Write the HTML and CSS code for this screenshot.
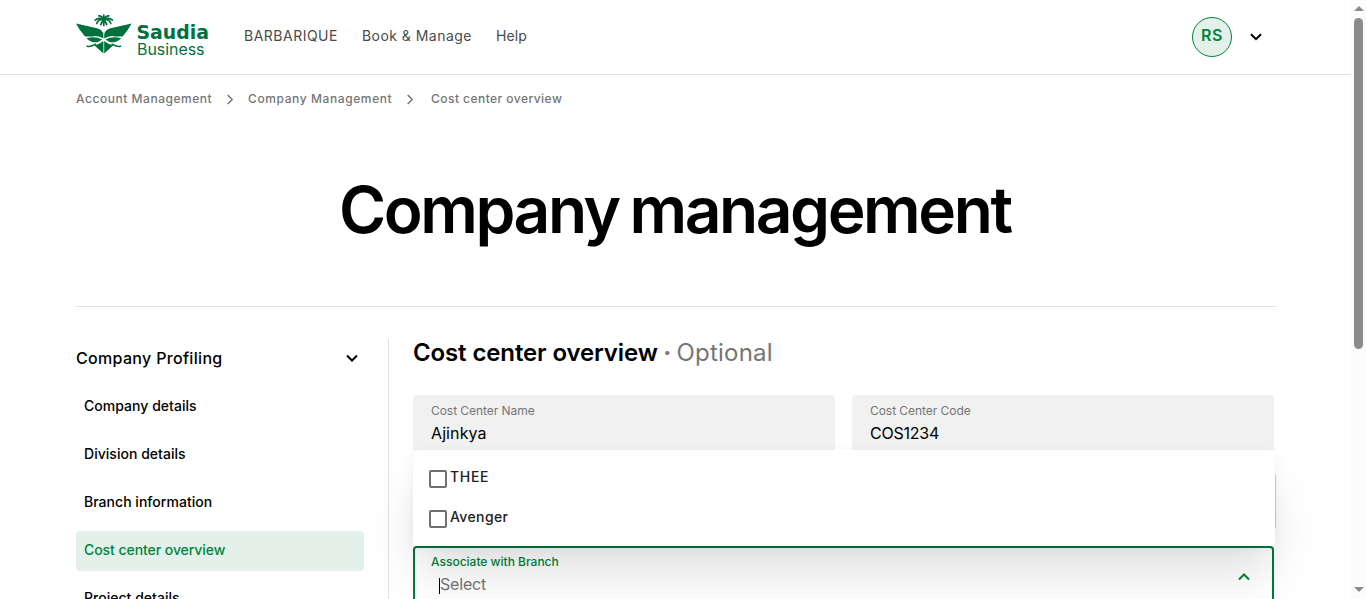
FILE: index.html
```html
<!DOCTYPE html>
<html lang="en">
<head>
<meta charset="utf-8">
<title>Company management</title>
<link rel="stylesheet" href="styles.css">
</head>
<body>
<div class="page">
  <header class="header">
    <svg class="logo" width="134" height="48" viewBox="76 12 134 48" role="img" aria-label="Saudia Business">
      <g fill="#00703c">
        <path d="M76 23.600 L97 28.200 Q102 29.500 103.300 33.500 L103.400 38.600 Q98.500 35.200 92.500 36.400 L85 36.600 Q79.500 30.500 76 23.600Z"/>
        <path d="M131.600 23.600 L110.600 28.200 Q105.600 29.500 104.300 33.500 L104.200 38.600 Q109.100 35.200 115.100 36.400 L122.600 36.600 Q128.100 30.500 131.600 23.600Z"/>
        <path d="M86.400 38.200 Q95 35.600 102.200 39.400 L97.600 42.200 Q91 43.200 86.400 38.200Z"/>
        <path d="M121.200 38.200 Q112.600 35.600 105.400 39.400 L110 42.200 Q116.600 43.200 121.200 38.200Z"/>
        <path d="M103.400 41 L103.400 53.600 L94.200 45.300 Q99.500 44.300 103.400 41Z"/>
        <path d="M104.200 41 L104.200 53.600 L113.400 45.300 Q108.100 44.300 104.200 41Z"/>
      </g>
      <g fill="none" stroke="#00703c" stroke-width="1.500" stroke-linecap="round">
        <path d="M87 46.200 Q91.500 47 95.500 44.200M120.600 46.200 Q116.100 47 112.100 44.200"/>
        <path stroke-width="1.700" d="M103.800 19.500V15M103.800 19 Q101.500 15.500 98.800 15.800M103.800 19 Q106.100 15.500 108.800 15.800M103 19.500 Q98.500 17 95.200 20.200M104.600 19.500 Q109.100 17 112.400 20.200M103 19.500 Q98.500 19 96.800 23.500M104.600 19.500 Q109.100 19 110.800 23.500M103.300 20 L100.800 24.500M104.300 20 L106.800 24.500M103.800 19V25.500"/>
      </g>
      <text class="logo-name" x="136.500" y="39" textLength="72.500" lengthAdjust="spacingAndGlyphs">Saudia</text>
      <text class="logo-sub" x="137" y="54.500" textLength="67.500" lengthAdjust="spacingAndGlyphs">Business</text>
    </svg>
    <nav class="nav">
      <a class="nav-brand">BARBARIQUE</a>
      <a class="nav-book">Book &amp; Manage</a>
      <a class="nav-help">Help</a>
    </nav>
    <div class="account">
      <div class="avatar">RS</div>
      <svg class="chevron" width="14" height="10" viewBox="0 0 14 10"><path d="M2 2.200 L7 7.200 L12 2.200"/></svg>
    </div>
  </header>
  <main class="content">
    <div class="crumbs">
      <a class="crumb-account">Account Management</a>
      <svg width="8" height="11" viewBox="0 0 8 11"><path d="M1.700 1 L6.200 5.500 L1.700 10"/></svg>
      <a class="crumb-company">Company Management</a>
      <svg class="crumb-last" width="8" height="11" viewBox="0 0 8 11"><path d="M1.700 1 L6.200 5.500 L1.700 10"/></svg>
      <span class="crumb-cost">Cost center overview</span>
    </div>
    <h1 class="title">Company management</h1>
    <div class="columns">
      <aside class="side">
        <div class="side-head"><span>Company Profiling</span>
          <svg class="chevron" width="14" height="10" viewBox="0 0 14 10"><path d="M2 2.500 L7 7.500 L12 2.500"/></svg>
        </div>
        <a class="item">Company details</a>
        <a class="item">Division details</a>
        <a class="item">Branch information</a>
        <a class="item active">Cost center overview</a>
        <a class="item">Project details</a>
      </aside>
      <section class="form">
        <h2 class="form-title">Cost center overview <span class="dot">·</span> <span class="optional">Optional</span></h2>
        <div class="fields">
          <div class="field"><label>Cost Center Name</label><span class="value">Ajinkya</span></div>
          <div class="field"><label>Cost Center Code</label><span class="value code">COS1234</span></div>
        </div>
        <div class="row-edge"></div>
        <div class="select">
          <div>
            <label>Associate with Branch</label>
            <div class="placeholder"><i class="caret"></i>Select</div>
          </div>
          <svg class="chevron" width="14" height="10" viewBox="0 0 14 10"><path d="M2 7.500 L7 2.500 L12 7.500"/></svg>
        </div>
        <div class="menu">
          <div class="option thee"><i class="box"></i><span>THEE</span></div>
          <div class="option"><i class="box"></i><span>Avenger</span></div>
        </div>
      </section>
    </div>
  </main>
</div>
<div class="scrollbar">
  <i class="arrow up"></i>
  <i class="thumb"></i>
  <i class="arrow down"></i>
</div>
</body>
</html>
```
FILE: styles.css
```css
* { box-sizing: border-box; }
body {
  margin: 0;
  height: 599px;
  display: flex;
  overflow: hidden;
  background: #fff;
  color: #000;
  font-family: Inter, "Liberation Sans", sans-serif;
}
.page { width: 1351px; height: 599px; overflow: hidden; }

.header {
  height: 75px;
  border-bottom: 1px solid #e0e0e0;
  padding: 0 88px 0 76px;
  display: flex;
  align-items: flex-start;
}
.logo { margin-top: 12px; flex: none; }
.logo-name { font: 700 19px "DejaVu Sans", sans-serif; fill: #00703c; }
.logo-sub { font: 400 15.500px Inter, sans-serif; fill: #00703c; }
.nav { display: flex; margin: 26px 0 0 34px; font-size: 14px; line-height: 20px; color: #4a4a4a; white-space: nowrap; }
.nav-brand { width: 118px; letter-spacing: .5px; }
.nav-book { width: 134px; letter-spacing: .46px; }
.nav-help { letter-spacing: .1px; }
.account { margin: 17px 0 0 auto; display: flex; align-items: center; gap: 17px; }
.avatar {
  width: 40px;
  height: 40px;
  border: 1px solid #00843d;
  border-radius: 50%;
  background: #e4f1ea;
  color: #00843d;
  font-size: 16px;
  font-weight: 600;
  line-height: 35px;
  text-align: center;
  letter-spacing: .5px;
}
.chevron { fill: none; stroke: #000; stroke-width: 2; stroke-linecap: butt; flex: none; }

.content { padding: 0 75px 0 76px; }
.crumbs { display: flex; align-items: center; height: 20px; margin-top: 14px; font-size: 12px; font-weight: 500; line-height: 20px; color: #757575; white-space: nowrap; }
.crumbs svg { fill: none; stroke: #6b6b6b; stroke-width: 1.300; margin-right: 14px; }
.crumbs .crumb-last { margin-right: 17px; }
.crumb-account { width: 150px; letter-spacing: .54px; }
.crumb-company { width: 158px; letter-spacing: .6px; }
.crumb-cost { letter-spacing: .46px; }
.title {
  margin: 0;
  height: 198px;
  padding: 61px 0 0 263px;
  font-size: 64px;
  font-weight: 600;
  line-height: 80px;
  letter-spacing: -2.430px;
  word-spacing: -3px;
  border-bottom: 1px solid #e0e0e0;
  white-space: nowrap;
}

.columns { display: flex; margin-top: 32px; }
.side { width: 313px; height: 300px; border-right: 1px solid #e0e0e0; padding-right: 24px; }
.side-head { display: flex; align-items: center; justify-content: space-between; height: 38px; padding-right: 5px; margin-bottom: 10px; font-size: 16px; font-weight: 500; letter-spacing: .32px; }
.item { display: block; height: 40px; margin-bottom: 8px; padding-left: 8px; border-radius: 4px; font-size: 14px; font-weight: 500; line-height: 38px; letter-spacing: .03px; }
.active { background: #e4f1ea; color: #00843d; letter-spacing: -.06px; }

.form { position: relative; flex: 1; padding-left: 24px; }
.form-title { margin: 0; height: 56px; font-size: 24px; font-weight: 600; line-height: 27px; letter-spacing: -.12px; white-space: nowrap; }
.dot, .optional { font-weight: 400; color: #757575; }
.dot { font-weight: 700; margin: 0 -.5px; }
.optional { letter-spacing: .22px; }
.fields { display: flex; gap: 17px; }
.field { width: 422px; height: 64px; padding: 6px 18px; border-radius: 4px; background: #f1f1f1; }
.field label, .select label { display: block; font-size: 12px; line-height: 20px; color: #757575; letter-spacing: -.05px; }
.value { display: block; font-size: 16px; line-height: 24px; letter-spacing: .1px; }
.code { letter-spacing: -.22px; }
.row-edge { height: 54px; margin-top: 15px; border-right: 1px solid #d2d2d2; }
.select {
  width: 861px;
  height: 64px;
  margin-top: 18px;
  padding: 4px 21px 0 16px;
  border: 2px solid #007a3d;
  border-radius: 4px;
  background: #fff;
  display: flex;
  justify-content: space-between;
}
.select label { color: #00843d; font-weight: 500; letter-spacing: 0; }
.select .chevron { margin-top: 20px; stroke: #00843d; }
.placeholder { display: flex; align-items: center; height: 24px; padding-left: 8px; font-size: 16px; letter-spacing: -.19px; color: #757575; }
.caret { width: 1px; height: 16px; background: #000; margin-top: 4px; }
.menu {
  position: absolute;
  left: 24px;
  top: 111px;
  width: 862px;
  height: 96px;
  padding: 7px 16px;
  border-radius: 4px;
  background: #fff;
  box-shadow: 0 32px 48px -4px rgba(0, 0, 0, .12), 0 3px 12px rgba(0, 0, 0, .05);
}
.option { display: flex; align-items: center; height: 40px; gap: 3px; font-size: 14px; font-weight: 500; letter-spacing: .38px; color: #212121; }
.option span { line-height: 20px; }
.thee { letter-spacing: .66px; }
.box { width: 18px; height: 18px; border: 2px solid #707070; border-radius: 2px; margin-top: 4px; }

.scrollbar { width: 15px; height: 599px; background: #fcfcfc; padding: 6px 3px 7px; display: flex; flex-direction: column; align-items: center; }
.arrow { width: 0; height: 0; border-left: 5px solid transparent; border-right: 5px solid transparent; }
.up { border-bottom: 5px solid #8b8b8b; margin-bottom: 7px; }
.thumb { width: 9px; height: 331px; border-radius: 5px; background: #8b8b8b; }
.down { border-top: 5px solid #8b8b8b; margin-top: auto; }
```
